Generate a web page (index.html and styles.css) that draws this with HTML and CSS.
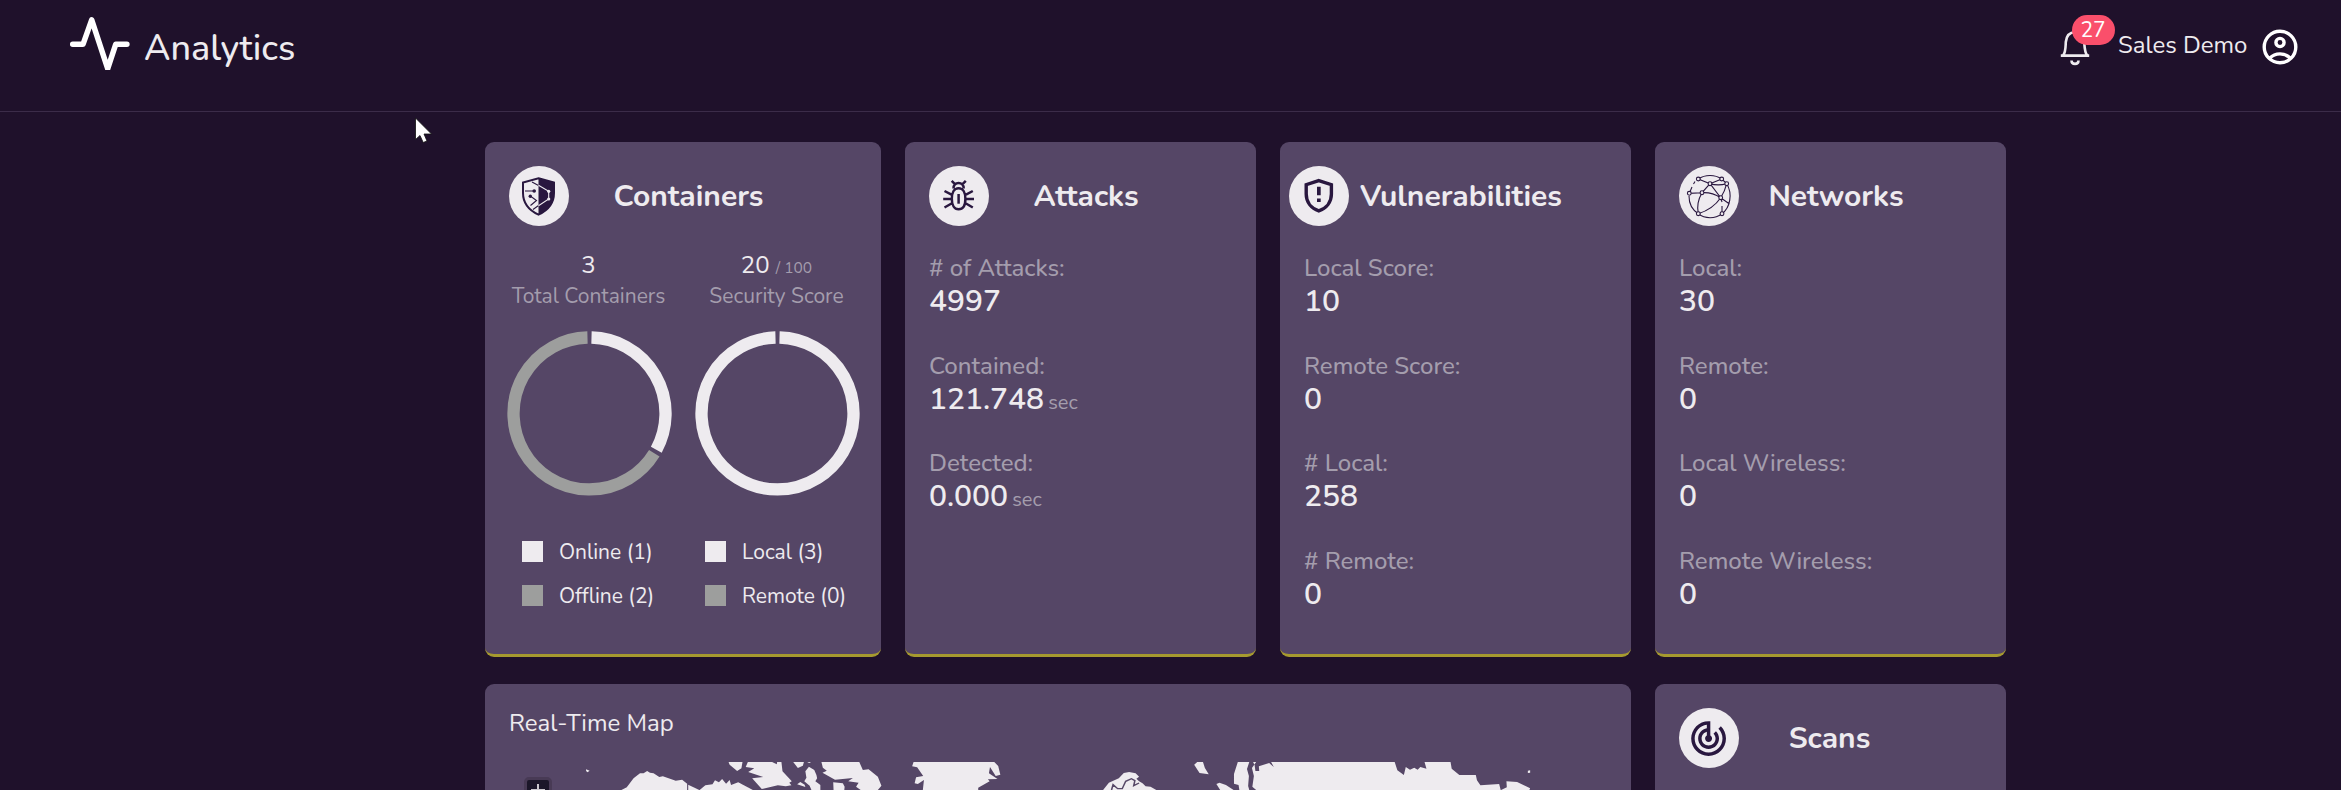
FILE: index.html
```html
<!DOCTYPE html>
<html lang="en">
<head>
<meta charset="utf-8">
<title>Analytics</title>
<link rel="stylesheet" href="styles.css">
</head>
<body>
<header class="topbar">
  <div class="brand">
    <svg class="pulse" width="64" height="60" viewBox="0 0 64 60"><path d="M6.700 34.300H17L25.700 9.800L41.700 58.700L49.700 34.300H60.900"/></svg>
    <span class="brand-name">Analytics</span>
  </div>
  <div class="user">
    <div class="bell">
      <svg width="32" height="38" viewBox="0 0 32 38"><path d="M1.800 25.600H30.200M4 25.600C7 22 6.500 16 6.800 12C7.500 5 11 2.200 16 2.200S24.500 5 25.200 12C25.500 16 25.500 22 28.200 25.600M12.500 30.500C12.500 35 19.500 35 19.500 30.500"/></svg>
      <span class="badge">27</span>
    </div>
    <span class="user-name">Sales Demo</span>
    <svg class="avatar" width="36" height="36" viewBox="0 0 36 36"><circle cx="18" cy="18" r="15.800"/><circle cx="18" cy="13.500" r="4.100"/><path d="M8 29C13 23.500 23 23.500 28 29"/></svg>
  </div>
</header>
<svg class="cursor" width="20" height="28" viewBox="0 0 20 28"><path d="M1.500 1V22.500L6 18.500L9.200 25.500L13 24L10 17H17.500Z"/></svg>

<main class="board">
  <section class="card">
    <div class="card-head">
      <svg class="disc" viewBox="0 0 60 60"><circle class="plate" cx="30" cy="30" r="30"/>
        <path class="ink-line w2" d="M29.500 12.200L45 16.600V27C45 37 38.500 44.500 29.500 48.700C20.500 44.500 14 37 14 27V16.600Z"/>
        <path class="ink" d="M29.500 12.200L45 16.600V27C45 37 38.500 44.500 29.500 48.700Z"/>
        <path class="ink-line w1" d="M16 25H25M22 30.500L27.500 34.500L21.500 39.500M23 16L29.500 19.500M29.500 39.500L24 43.500"/>
        <circle class="ink" cx="25.200" cy="25" r="1.800"/><circle class="ink" cx="21.300" cy="30.300" r="1.700"/>
        <path class="plate-line w1" d="M29.500 19.200L39.700 25.300V33L29.500 39.800"/>
        <circle class="plate" cx="39.700" cy="25.300" r="1.600"/><circle class="plate" cx="39.700" cy="33" r="1.600"/>
      </svg>
      <h2>Containers</h2>
    </div>
    <div class="rings">
      <div class="ring-col">
        <div class="num">3</div>
        <div class="sub">Total Containers</div>
        <svg class="ring" width="165" height="165" viewBox="-82.500 -82.500 165 165"><path class="on" d="M2 -76A76 76 0 0 1 66.800 36.300"/><path class="off" d="M64.800 39.700A76 76 0 1 1 -2 -76"/></svg>
      </div>
      <div class="ring-col">
        <div class="num">20 <small>/ 100</small></div>
        <div class="sub">Security Score</div>
        <svg class="ring" width="165" height="165" viewBox="-82.500 -82.500 165 165"><path class="on" d="M2 -76A76 76 0 1 1 -2 -76"/></svg>
      </div>
    </div>
    <div class="legend">
      <div><i></i>Online (1)</div><div><i></i>Local (3)</div>
      <div><i class="dim"></i>Offline (2)</div><div><i class="dim"></i>Remote (0)</div>
    </div>
  </section>

  <section class="card">
    <div class="card-head">
      <svg class="disc" viewBox="0 0 60 60"><circle class="plate" cx="30" cy="30" r="30"/>
        <path class="ink-line w3" d="M29.600 22.200C34 22.200 36.400 26.500 36.400 32.800S34 43.300 29.600 43.300S22.800 39 22.800 32.800S25.200 22.200 29.600 22.200ZM24.500 22.500C24 15 35.200 15 34.700 22.500M22.700 14.800L26.200 18.300M36.800 14.800L33.300 18.300M14.200 33H22.500M37 33H45M15.500 25L22.500 28.600M43.800 25L37 28.600M15.500 41.500L22.500 37.500M43.800 41.500L37 37.500"/>
        <path class="ink-line w3" d="M29.600 28V37.700"/>
      </svg>
      <h2>Attacks</h2>
    </div>
    <dl class="stats">
      <div><dt># of Attacks:</dt><dd>4997</dd></div>
      <div><dt>Contained:</dt><dd>121.748<small>sec</small></dd></div>
      <div><dt>Detected:</dt><dd>0.000<small>sec</small></dd></div>
    </dl>
  </section>

  <section class="card">
    <div class="card-head tight">
      <svg class="disc" viewBox="0 0 60 60"><circle class="plate" cx="30" cy="30" r="30"/>
        <path class="ink-line w35" d="M29.800 14.600L42.400 18.700V28C42.400 36.500 37 42.500 29.800 44.900C22.600 42.500 17.200 36.500 17.200 28V18.700Z"/>
        <path class="ink" d="M28 20.700H31.700V29.300H28ZM28 32.500H31.700V36H28Z"/>
      </svg>
      <h2>Vulnerabilities</h2>
    </div>
    <dl class="stats">
      <div><dt>Local Score:</dt><dd>10</dd></div>
      <div><dt>Remote Score:</dt><dd>0</dd></div>
      <div><dt># Local:</dt><dd>258</dd></div>
      <div><dt># Remote:</dt><dd>0</dd></div>
    </dl>
  </section>

  <section class="card">
    <div class="card-head">
      <svg class="disc" viewBox="0 0 60 60"><circle class="plate" cx="30" cy="30" r="30"/>
        <g class="ink-line w1"><path d="M10 30A21.300 21.300 0 0 0 19.500 48M19.300 47.700C26 53 36 53 43 47.700C51 42 54 28 47.700 17.700L42.700 13C36 8.300 26 8.300 19.300 13M16 15.500L14.500 18M13 21L10.300 27.300L23 26.700L31 17.700L19.300 13M31 17.700L42.700 13M31 17.700Q39 20 47.700 17.700Q46 25 41.700 31.700Q33 26 23 26.700Q17 37 19.300 47.700Q34 43 41.700 31.700L31 17.700M41.700 31.700L50.500 38M41.700 31.700L43 36M43 40V47.700"/></g>
        <g class="node"><circle cx="19.300" cy="13" r="1.900"/><circle cx="42.700" cy="13" r="1.900"/><circle cx="31" cy="17.700" r="1.900"/><circle cx="47.700" cy="17.700" r="1.900"/><circle cx="10.300" cy="27.300" r="1.900"/><circle cx="23" cy="26.700" r="1.900"/><circle cx="41.700" cy="31.700" r="1.900"/><circle cx="19.300" cy="47.700" r="1.900"/><circle cx="43" cy="47.700" r="1.900"/></g>
      </svg>
      <h2>Networks</h2>
    </div>
    <dl class="stats">
      <div><dt>Local:</dt><dd>30</dd></div>
      <div><dt>Remote:</dt><dd>0</dd></div>
      <div><dt>Local Wireless:</dt><dd>0</dd></div>
      <div><dt>Remote Wireless:</dt><dd>0</dd></div>
    </dl>
  </section>

  <section class="card map-card">
    <h3>Real-Time Map</h3>
    <div class="map">
      <svg width="1098" height="28" viewBox="0 0 1098 28">
        <g class="land" transform="translate(-34 -92) scale(.35714 .33333)">
          <path d="M311 298L321 302L315 307L311 303ZM410 360L425 352L444 325L462 310L472 310L482 303L490 308L500 310L516 321L526 319L562 332L580 329L594 341V360ZM597 344L628 360H597ZM629 360L645 346L665 343L672 331L683 337L692 327L703 341L713 330L717 345L737 337L778 360ZM710 276H749L746 295L734 303L713 284ZM764 276H832L845 283L846 276H858L861 304L887 334L880 338L886 346L870 349L848 346L803 357L776 325L807 321L765 306L782 295L758 291ZM891 276H921L918 287L904 294ZM930 276H941L936 279ZM935 290L950 300L956 315L958 325L953 334L967 345V360H942L937 347L922 334L928 323L925 304ZM902 343L911 336L923 344L925 351ZM970 276H1076L1086 300L1102 298L1128 320L1138 347L1128 360H1080L1067 350L1074 338L1045 334L1058 324L1008 329L973 308L985 302L974 293ZM1003 337L1030 340L1035 350L1034 360H1004ZM1228 276H1454L1465 288L1471 314L1458 318L1442 291L1439 310L1463 327L1436 328L1441 334L1409 353L1409 360H1254L1257 330L1240 342L1231 340L1235 322L1255 318L1238 292L1224 289Z"/>
        </g>
        <g class="land" transform="translate(526 -92) scale(.38265 .33333)">
          <path d="M178 360L193 338L219 325L232 309L246 306L263 310L272 320L265 326L272 334L281 340L289 349L302 350L317 360ZM416 284L424 276H439L444 294L454 313L430 309ZM474 342L482 338L499 345L519 360H484ZM530 276H560L554 297L559 318L557 348L560 360H534L532 345L520 341V312ZM570 276H578L567 294L572 318L568 350L578 360H1217L1213 342L1164 346L1155 331L1152 315H1109L1089 296L1086 276H1018L1023 296L1007 291L1000 299L991 293L980 299L969 291L964 315L947 301L940 276H617L624 291L612 279L585 289L586 303L576 303L574 286ZM1218 360L1233 352L1232 334L1260 336L1294 355L1292 360ZM1288 302L1294 301V308L1288 309Z"/>
          <path class="coast" d="M200 360L204 344L216 356H228L237 334L252 326L261 332L258 347L272 339"/>
        </g>
      </svg>
      <span class="zoom-in"><b></b></span>
    </div>
  </section>

  <section class="card scans">
    <div class="card-head">
      <svg class="disc" viewBox="0 0 60 60"><circle class="plate" cx="30" cy="30" r="30"/>
        <path class="ink" transform="translate(8.700 9.700) scale(1.740)" d="M19.070 4.930l-1.410 1.410C19.100 7.790 20 9.790 20 12c0 4.420-3.580 8-8 8s-8-3.580-8-8c0-4.080 3.050-7.440 7-7.930v2.020C8.160 6.570 6 9.030 6 12c0 3.310 2.690 6 6 6s6-2.690 6-6c0-1.660-.67-3.160-1.760-4.240l-1.410 1.410C15.550 9.900 16 10.900 16 12c0 2.210-1.790 4-4 4s-4-1.790-4-4c0-1.860 1.280-3.410 3-3.860v2.140c-.6.350-1 .980-1 1.720 0 1.100.9 2 2 2s2-.9 2-2c0-.740-.4-1.380-1-1.720V2h-1C6.480 2 2 6.480 2 12s4.480 10 10 10 10-4.480 10-10c0-2.760-1.120-5.260-2.930-7.070z"/>
      </svg>
      <h2>Scans</h2>
    </div>
  </section>
</main>
</body>
</html>
```
FILE: styles.css
```css
* { box-sizing: border-box; }
body { margin: 0; height: 790px; overflow: hidden; background: #1f112b; color: #eeebef; font-family: Nunito, Lato, "Noto Sans", sans-serif; }
svg { display: block; flex: none; }
.topbar { height: 112px; border-bottom: 1px solid #3b2c49; display: flex; justify-content: space-between; align-items: flex-start; padding: 10px 43px 0 66px; }
.brand { display: flex; gap: 14px; }
.pulse { fill: none; stroke: #fff; stroke-width: 5.500; stroke-linecap: round; stroke-linejoin: round; }
.brand-name { font-size: 36px; font-weight: 550; line-height: 44px; margin-top: 17px; }
.user { display: flex; }
.bell { position: relative; width: 59px; padding-top: 20px; }
.bell svg { fill: none; stroke: #eeebef; stroke-width: 2.600; }
.badge { position: absolute; left: 13px; top: 5px; width: 43px; height: 30px; border-radius: 15px; background: #fa4f6b; color: #fff; font-size: 21px; line-height: 30px; text-align: center; padding-right: 1px; }
.user-name { font-size: 24px; line-height: 30px; margin-top: 20px; width: 144px; }
.avatar { margin-top: 19px; fill: none; stroke: #fff; stroke-width: 3.400; }
.cursor { position: absolute; left: 414px; top: 117px; fill: #fff; stroke: #111; stroke-width: .8; }
.board { margin: 30px 335px 0 485px; height: 648px; overflow: hidden; display: grid; grid-template-columns: 396px 351px 351px 351px; grid-template-rows: 515px 106px; column-gap: 24px; row-gap: 27px; }
.card { background: #554666; border-bottom: 3px solid #a69a2f; border-radius: 9px; padding: 24px; }
.card-head { display: flex; height: 60px; align-items: center; }
.disc { width: 60px; height: 60px; }
.plate { fill: #eeebef; }
.ink { fill: #29173f; }
.ink-line { fill: none; stroke: #29173f; }
.plate-line { fill: none; stroke: #eeebef; }
.w1 { stroke-width: 1.100; }
.w2 { stroke-width: 2; }
.w3 { stroke-width: 2.500; }
.w35 { stroke-width: 3.400; }
.node { fill: #eeebef; stroke: #29173f; stroke-width: 1.100; }
h2 { margin: 0; flex: 1; padding: 2px 49px 0 0; text-align: center; font-size: 30px; font-weight: 700; line-height: 40px; white-space: nowrap; }
.tight { margin-left: -15px; }
.tight h2 { text-align: left; padding: 2px 0 0 11px; }
.rings { display: grid; grid-template-columns: 188px 188px; margin: 24px 0 0 -13.500px; }
.ring-col { text-align: center; }
.num, .sub { position: relative; left: -1px; }
.num { font-size: 24px; line-height: 30px; height: 30px; }
.num small { font-size: 15.500px; line-height: 1; color: #a49dad; }
.sub { font-size: 21px; line-height: 32px; color: #a49dad; }
.ring { margin: 19px auto 0; fill: none; stroke-width: 12.300; }
.on { stroke: #eeebef; }
.off { stroke: #9d9e9d; }
.legend { display: grid; grid-template-columns: 183px 183px; grid-auto-rows: 44px; margin: 33.500px 0 0 13px; font-size: 21px; }
.legend div { display: flex; align-items: center; gap: 16px; white-space: nowrap; }
.legend i { width: 21px; height: 21px; background: #eeebef; }
.legend i.dim { background: #9d9e9d; }
.stats { margin: 26px 0 0; }
.stats div { height: 97.600px; }
dt { font-size: 24px; line-height: 33px; font-weight: 550; color: #a49dad; }
dd { margin: 0; font-size: 30px; line-height: 33px; font-weight: 600; }
dd small { margin-left: 4px; font-size: 20px; line-height: 1; font-weight: 400; color: #a49dad; }
.map-card { grid-column: span 3; }
.map-card, .scans { border-bottom: 0; border-radius: 9px 9px 0 0; padding-bottom: 0; overflow: hidden; }
.scans h2 { padding-right: 62px; }
h3 { margin: 0; font-size: 24px; line-height: 30px; font-weight: 400; }
.map { position: relative; margin-top: 24px; }
.land { fill: #eeebef; }
.coast { fill: none; stroke: #554666; stroke-width: 4; }
.zoom-in { position: absolute; left: 15px; top: 15px; width: 28px; height: 40px; border: 3px solid #483a55; border-radius: 5px; background: #1b1629; }
.zoom-in b { position: absolute; left: 4px; top: 4px; width: 14px; height: 12px; background: linear-gradient(#c9c6cc, #c9c6cc) center / 14px 2px no-repeat, linear-gradient(#c9c6cc, #c9c6cc) center / 2px 12px no-repeat; }
```
